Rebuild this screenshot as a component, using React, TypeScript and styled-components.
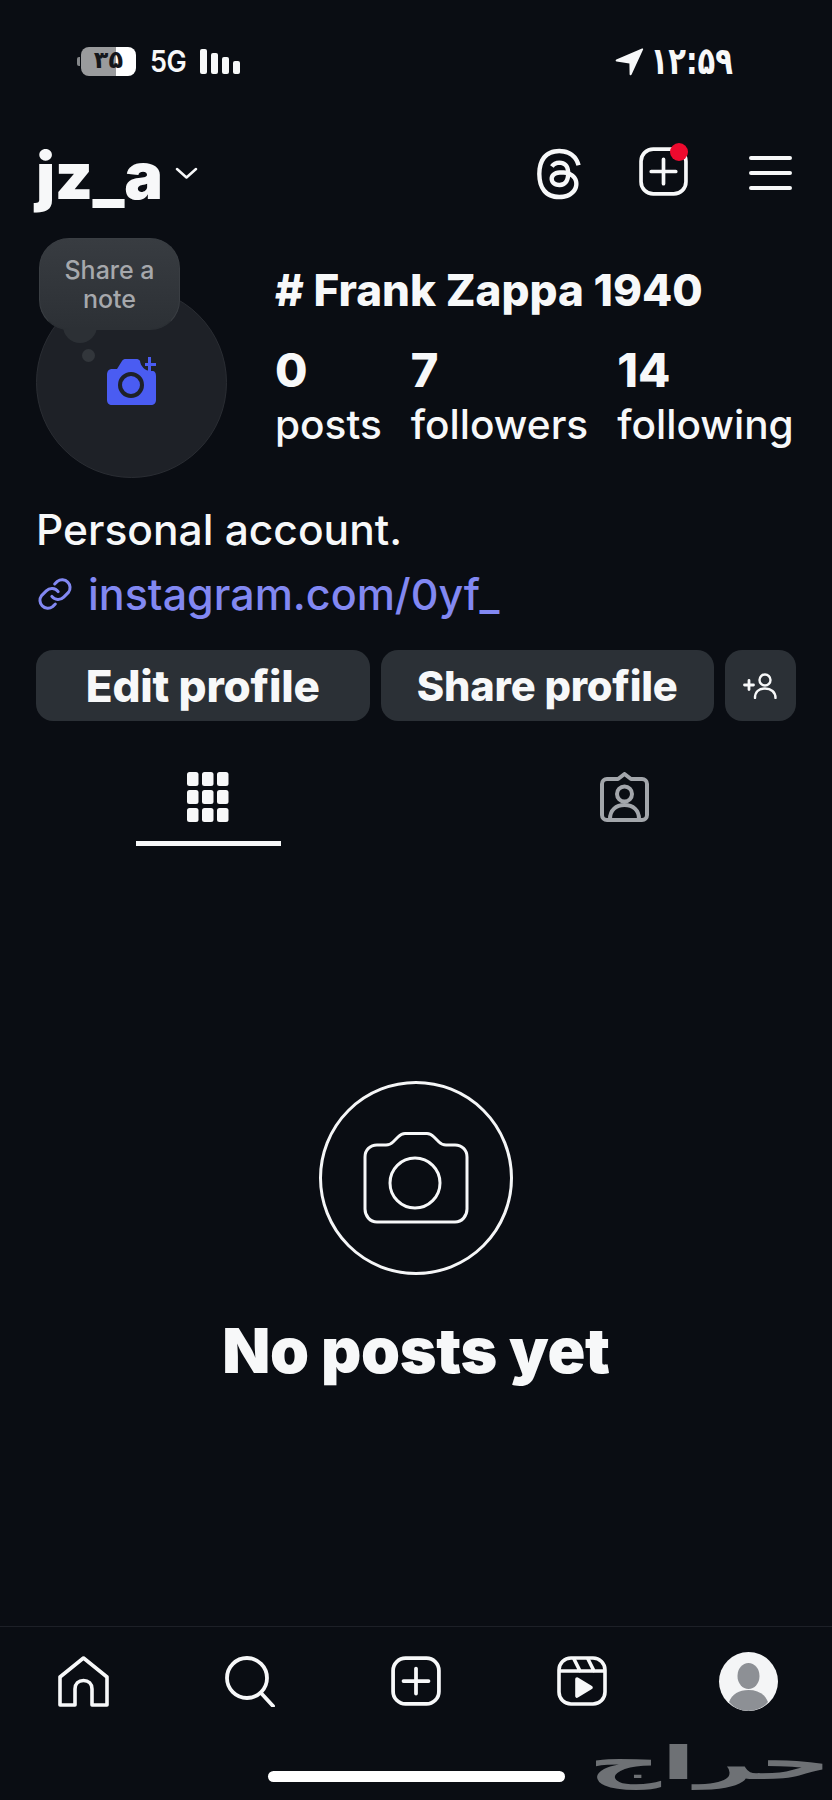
import React from "react"
import styled, { createGlobalStyle } from "styled-components"
import { FaThreads } from "react-icons/fa6"

const GlobalStyle = createGlobalStyle`
  html, body {
    margin: 0;
    padding: 0;
    background: #0a0d13;
  }
  * {
    box-sizing: border-box;
  }
`

const Page = styled.div`
  position: relative;
  width: 832px;
  height: 1800px;
  display: flex;
  flex-direction: column;
  overflow: hidden;
  background: #0a0d13;
  color: #f7f8f9;
  font-family: Inter, "Noto Sans", sans-serif;
`

const StatusBar = styled.div`
  height: 147px;
  padding: 46px 99px 0 77px;
  display: flex;
  justify-content: space-between;
  align-items: flex-start;
`

const StatusGroup = styled.div`
  display: flex;
  align-items: center;
  height: 30px;
`

const Battery = styled.div`
  position: relative;
  width: 55px;
  height: 29px;
  margin-left: 4px;
  border-radius: 8px;
  background: linear-gradient(to right, #9a9b9d 64%, #ffffff 64%);
  color: #14161a;
  font-family: "DejaVu Sans", sans-serif;
  font-weight: 700;
  font-size: 24px;
  line-height: 27px;
  text-align: center;
`

const BatteryNub = styled.span`
  position: absolute;
  left: -4px;
  top: 10px;
  width: 3px;
  height: 9px;
  border-radius: 2px 0 0 2px;
  background: #85878a;
`

const Network = styled.span`
  margin-left: 14px;
  font-size: 27px;
  font-weight: 600;
  letter-spacing: -0.5px;
  transform: scaleY(1.1);
`

const SignalBars = styled.div`
  display: flex;
  align-items: flex-end;
  gap: 4px;
  height: 26px;
  margin-left: 14px;
`

const SignalBar = styled.span<{ $h: number }>`
  width: 7px;
  height: ${(p) => p.$h}px;
  border-radius: 2px;
  background: #f7f8f9;
`

const Clock = styled.span`
  margin-left: 7px;
  font-family: "DejaVu Sans", sans-serif;
  font-size: 29px;
  font-weight: 700;
  direction: ltr;
  transform: scaleY(1.3);
`

const Header = styled.header`
  height: 83px;
  padding: 0 40px 0 36px;
  display: flex;
  align-items: flex-start;
  justify-content: space-between;
`

const AccountName = styled.div`
  display: flex;
  align-items: flex-start;
  gap: 13px;
`

const Username = styled.h1`
  margin: -3px 0 0;
  font-size: 65px;
  font-weight: 900;
  line-height: 64px;
  letter-spacing: -0.5px;
`

const Chevron = styled.svg`
  margin-top: 20px;
`

const HeaderActions = styled.div`
  display: flex;
  align-items: flex-start;
`

const ActionSlot = styled.div<{ $w: number; $top?: number }>`
  position: relative;
  width: ${(p) => p.$w}px;
  margin-top: ${(p) => p.$top ?? 0}px;
  display: flex;
  justify-content: flex-start;
`

const NotifyDot = styled.span`
  position: absolute;
  left: 31px;
  top: -4px;
  width: 18px;
  height: 18px;
  border-radius: 50%;
  background: #ee0a2e;
`

const ProfileRow = styled.section`
  padding: 0 40px 0 36px;
  height: 248px;
  display: flex;
  gap: 48px;
`

const AvatarWrap = styled.div`
  position: relative;
  width: 191px;
  height: 248px;
  flex-shrink: 0;
`

const AvatarCircle = styled.div`
  position: absolute;
  left: 0;
  top: 57px;
  width: 191px;
  height: 191px;
  border-radius: 50%;
  background: #1e2127;
  border: 1px solid #2a2d33;
  display: flex;
  align-items: center;
  justify-content: center;
  padding: 0 1px 4px 0;
`

const NoteBubble = styled.div`
  position: absolute;
  left: 3px;
  top: 8px;
  width: 141px;
  height: 92px;
  padding-top: 17px;
  border-radius: 30px;
  background: linear-gradient(to bottom, #383c41, #2c3035);
  border: 1px solid #3a3e43;
  border-bottom-color: #2c3035;
  color: #a6a8ac;
  font-size: 25px;
  font-weight: 500;
  line-height: 29px;
  text-align: center;
`

const NoteTail = styled.span`
  position: absolute;
  left: 27px;
  top: 90px;
  width: 34px;
  height: 23px;
  border-radius: 0 0 17px 17px;
  background: #2c3035;
`

const NoteDot = styled.span`
  position: absolute;
  left: 46px;
  top: 119px;
  width: 13px;
  height: 13px;
  border-radius: 50%;
  background: #32363b;
`

const ProfileInfo = styled.div`
  display: flex;
  flex-direction: column;
  padding-top: 35px;
`

const DisplayName = styled.h2`
  margin: 0;
  font-size: 44px;
  font-weight: 800;
  line-height: 50px;
  white-space: nowrap;
`

const Stats = styled.div`
  display: flex;
  gap: 29px;
  margin-top: 29px;
`

const Stat = styled.div`
  display: flex;
  flex-direction: column;
`

const StatValue = styled.span`
  font-size: 47px;
  font-weight: 800;
  line-height: 52px;
`

const StatLabel = styled.span`
  margin-top: 4px;
  font-size: 40.6px;
  font-weight: 500;
  line-height: 50px;
  white-space: nowrap;
`

const Bio = styled.section`
  padding: 0 36px;
  display: flex;
  flex-direction: column;
  margin-top: 20px;
`

const BioLine = styled.p`
  margin: 0;
  font-size: 42.5px;
  font-weight: 500;
  line-height: 64px;
`

const LinkLine = styled.a`
  display: flex;
  align-items: center;
  gap: 14px;
  color: #8288f2;
  font-size: 43px;
  font-weight: 500;
  line-height: 64px;
`

const Buttons = styled.div`
  padding: 0 36px;
  margin-top: 24px;
  display: flex;
  gap: 11px;
`

const ProfileButton = styled.button<{ $size?: number }>`
  flex: 1;
  height: 71px;
  border: 0;
  border-radius: 17px;
  background: #2b3036;
  color: #f7f8f9;
  font-family: inherit;
  font-size: ${(p) => p.$size ?? 41.6}px;
  font-weight: 800;
  letter-spacing: -0.2px;
`

const SmallButton = styled(ProfileButton)`
  flex: 0 0 71px;
  display: flex;
  align-items: center;
  justify-content: center;
  padding: 0;
`

const Tabs = styled.nav`
  display: grid;
  grid-template-columns: 416px 416px;
  margin-top: 51px;
`

const Tab = styled.div`
  display: flex;
  flex-direction: column;
  align-items: center;
  height: 74px;
`

const TabIndicator = styled.span<{ $on: boolean }>`
  width: 145px;
  height: 5px;
  margin-top: 19px;
  background: ${(p) => (p.$on ? "#f7f8f9" : "transparent")};
`

const Empty = styled.main`
  flex: 1;
  display: flex;
  flex-direction: column;
  align-items: center;
  padding-top: 235px;
`

const EmptyCircle = styled.div`
  width: 194px;
  height: 194px;
  border-radius: 50%;
  border: 3px solid #f5f6f7;
  display: flex;
  align-items: center;
  justify-content: center;
`

const EmptyTitle = styled.h3`
  margin: 40px 0 0;
  font-size: 62.5px;
  font-weight: 900;
  line-height: 70px;
  letter-spacing: -0.3px;
`

const BottomNav = styled.nav`
  height: 174px;
  border-top: 1px solid #1d2027;
  padding: 29px 0 0 58px;
  display: flex;
  gap: 116px;
  align-items: flex-start;
`

const NavAvatar = styled.div`
  width: 59px;
  height: 59px;
  margin: -4px 0 0 -4px;
  border-radius: 50%;
  overflow: hidden;
  background: #f4f5f6;
`

const HomeIndicator = styled.span`
  position: absolute;
  left: 268px;
  top: 1771px;
  width: 297px;
  height: 11px;
  border-radius: 6px;
  background: #ffffff;
`

const Watermark = styled.span`
  position: absolute;
  right: 0;
  top: 1735px;
  color: #6e7175;
  font-family: "DejaVu Sans", sans-serif;
  font-size: 46px;
  font-weight: 700;
  line-height: 56px;
  transform: scaleX(2.2);
  transform-origin: right center;
`

const stroke = { fill: "none", stroke: "currentColor", strokeLinecap: "round", strokeLinejoin: "round" } as const

const PlusSquare = ({ size }: { size: number }) => (
  <svg width={size} height={size} viewBox="0 0 48 48" {...stroke} strokeWidth="3.6">
    <rect x="2" y="2" width="44" height="44" rx="12" />
    <path d="M24 12v24M12 24h24" />
  </svg>
)

const Hamburger = () => (
  <svg width="43" height="38" viewBox="0 0 43 38" {...stroke} strokeWidth="4">
    <path d="M2 4h39M2 19h39M2 34h39" />
  </svg>
)

const LocationArrow = () => (
  <svg width="29" height="29" viewBox="0 0 29 29" fill="currentColor">
    <path d="M27 1.5c.8-.4 1.4.3 1.1 1.1L16.6 27.6c-.5 1.1-2 .8-2-.4l-.2-10.8L1.6 14.5c-1.1-.2-1.3-1.6-.3-2.1z" />
  </svg>
)

const Grid = () => (
  <svg width="42" height="50" viewBox="0 0 42 50" fill="currentColor">
    {[0, 18, 36].map((y) =>
      [0, 15, 30].map((x) => <rect key={`${x}-${y}`} x={x} y={y} width="11.5" height="14" rx="2.5" />)
    )}
  </svg>
)

const TaggedIcon = () => (
  <svg width="49" height="50" viewBox="0 0 49 50" {...stroke} strokeWidth="4" color="#a3a6ab">
    <path d="M7 7h11l6.5-5L31 7h11a5 5 0 0 1 5 5v31a5 5 0 0 1-5 5H7a5 5 0 0 1-5-5V12a5 5 0 0 1 5-5z" />
    <circle cx="24.5" cy="22" r="7.5" />
    <path d="M10 47c0-9 6-14 14.5-14S39 38 39 47" />
  </svg>
)

const AddPerson = () => (
  <svg width="35" height="26" viewBox="0 0 35 26" {...stroke} strokeWidth="2.4">
    <circle cx="22" cy="7" r="5.5" />
    <path d="M12 25c0-6 4-9.5 10-9.5S32.5 19 32.5 25" />
    <path d="M1.5 12h9M6 7.5v9" strokeWidth="2.8" />
  </svg>
)

const SmallCamera = () => (
  <svg width="50" height="50" viewBox="0 0 50 50">
    <path
      fill="#4a5cf2"
      d="M6 13h5l5-8c1-1.5 2-2 4-2h10c2 0 3 .5 4 2 .5 5 5 10 11 10h1c3 0 4 2 4 5v24c0 3-2 5-5 5H6c-3 0-5-2-5-5V19c0-4 2-6 5-6z"
    />
    <circle cx="25" cy="29" r="11" fill="none" stroke="#1e2127" strokeWidth="4" />
    <path fill="#4a5cf2" d="M39 7h3V1h3v6h5v3h-5v6h-3v-6h-3z" />
  </svg>
)

const BigCamera = () => (
  <svg width="106" height="92" viewBox="0 0 106 92" {...stroke} strokeWidth="3">
    <path d="M14 13h9c3 0 5-1 7-3l5-5c2-2 4-3.5 7-3.5h22c3 0 5 1.5 7 3.5l5 5c2 2 4 3 7 3h9c7 0 12 5 12 12v52c0 7-5 13-12 13H14C7 90 2 84 2 77V25c0-7 5-12 12-12z" />
    <circle cx="52" cy="51" r="25" />
  </svg>
)

const HomeIcon = () => (
  <svg width="51" height="51" viewBox="0 0 51 51" {...stroke} strokeWidth="3.6">
    <path d="M2 49V21L25.5 2 49 21v28H34V33c0-5-3.5-8.5-8.5-8.5S17 28 17 33v16z" />
  </svg>
)

const SearchIcon = () => (
  <svg width="50" height="51" viewBox="0 0 50 51" {...stroke} strokeWidth="3.8">
    <circle cx="22" cy="22" r="20" />
    <path d="M36 37l12 13" />
  </svg>
)

const ReelsIcon = () => (
  <svg width="50" height="50" viewBox="0 0 50 50" {...stroke} strokeWidth="3.6">
    <rect x="2" y="2" width="46" height="46" rx="12" />
    <path d="M3 15h44M17 3l6 12M31 3l6 12" />
    <path d="M20 23l14 8.5L20 40z" fill="currentColor" />
  </svg>
)

const PersonFill = () => (
  <svg width="59" height="59" viewBox="0 0 59 59" fill="#8d9095">
    <ellipse cx="29.5" cy="24" rx="11" ry="13" />
    <path d="M10 50c3-8 10-12 19.5-12S46 42 49 50c-5 6-12 9-19.5 9S15 56 10 50z" />
  </svg>
)

const LinkIcon = () => (
  <svg width="38" height="38" viewBox="0 0 24 24" {...stroke} strokeWidth="1.9">
    <path d="M10 13.5a5 5 0 0 0 7.5.5l3-3a5 5 0 0 0-7-7l-1.7 1.7" />
    <path d="M14 10.5a5 5 0 0 0-7.5-.5l-3 3a5 5 0 0 0 7 7l1.7-1.7" />
  </svg>
)

const stats = [
  { value: "0", label: "posts" },
  { value: "7", label: "followers" },
  { value: "14", label: "following" },
]

export default function App() {
  return (
    <Page>
      <GlobalStyle />
      <StatusBar>
        <StatusGroup>
          <Battery>
            <BatteryNub />
            ۳۵
          </Battery>
          <Network>5G</Network>
          <SignalBars>
            <SignalBar $h={25} />
            <SignalBar $h={21} />
            <SignalBar $h={17} />
            <SignalBar $h={13} />
          </SignalBars>
        </StatusGroup>
        <StatusGroup>
          <LocationArrow />
          <Clock>۱۲:۵۹</Clock>
        </StatusGroup>
      </StatusBar>

      <Header>
        <AccountName>
          <Username>jz_a</Username>
          <Chevron width="23" height="12" viewBox="0 0 23 12" {...stroke} strokeWidth="2.5">
            <path d="M2 2l9.5 8.5L21 2" />
          </Chevron>
        </AccountName>
        <HeaderActions>
          <ActionSlot $w={107}>
            <FaThreads size={54} />
          </ActionSlot>
          <ActionSlot $w={110}>
            <PlusSquare size={49} />
            <NotifyDot />
          </ActionSlot>
          <ActionSlot $w={43} $top={7}>
            <Hamburger />
          </ActionSlot>
        </HeaderActions>
      </Header>

      <ProfileRow>
        <AvatarWrap>
          <AvatarCircle>
            <SmallCamera />
          </AvatarCircle>
          <NoteTail />
          <NoteDot />
          <NoteBubble>
            Share a
            <br />
            note
          </NoteBubble>
        </AvatarWrap>
        <ProfileInfo>
          <DisplayName># Frank Zappa 1940</DisplayName>
          <Stats>
            {stats.map((s) => (
              <Stat key={s.label}>
                <StatValue>{s.value}</StatValue>
                <StatLabel>{s.label}</StatLabel>
              </Stat>
            ))}
          </Stats>
        </ProfileInfo>
      </ProfileRow>

      <Bio>
        <BioLine>Personal account.</BioLine>
        <LinkLine>
          <LinkIcon />
          instagram.com/0yf_
        </LinkLine>
      </Bio>

      <Buttons>
        <ProfileButton $size={44}>Edit profile</ProfileButton>
        <ProfileButton>Share profile</ProfileButton>
        <SmallButton>
          <AddPerson />
        </SmallButton>
      </Buttons>

      <Tabs>
        <Tab>
          <Grid />
          <TabIndicator $on />
        </Tab>
        <Tab>
          <TaggedIcon />
          <TabIndicator $on={false} />
        </Tab>
      </Tabs>

      <Empty>
        <EmptyCircle>
          <BigCamera />
        </EmptyCircle>
        <EmptyTitle>No posts yet</EmptyTitle>
      </Empty>

      <BottomNav>
        <HomeIcon />
        <SearchIcon />
        <PlusSquare size={50} />
        <ReelsIcon />
        <NavAvatar>
          <PersonFill />
        </NavAvatar>
      </BottomNav>

      <HomeIndicator />
      <Watermark>حراج</Watermark>
    </Page>
  )
}
